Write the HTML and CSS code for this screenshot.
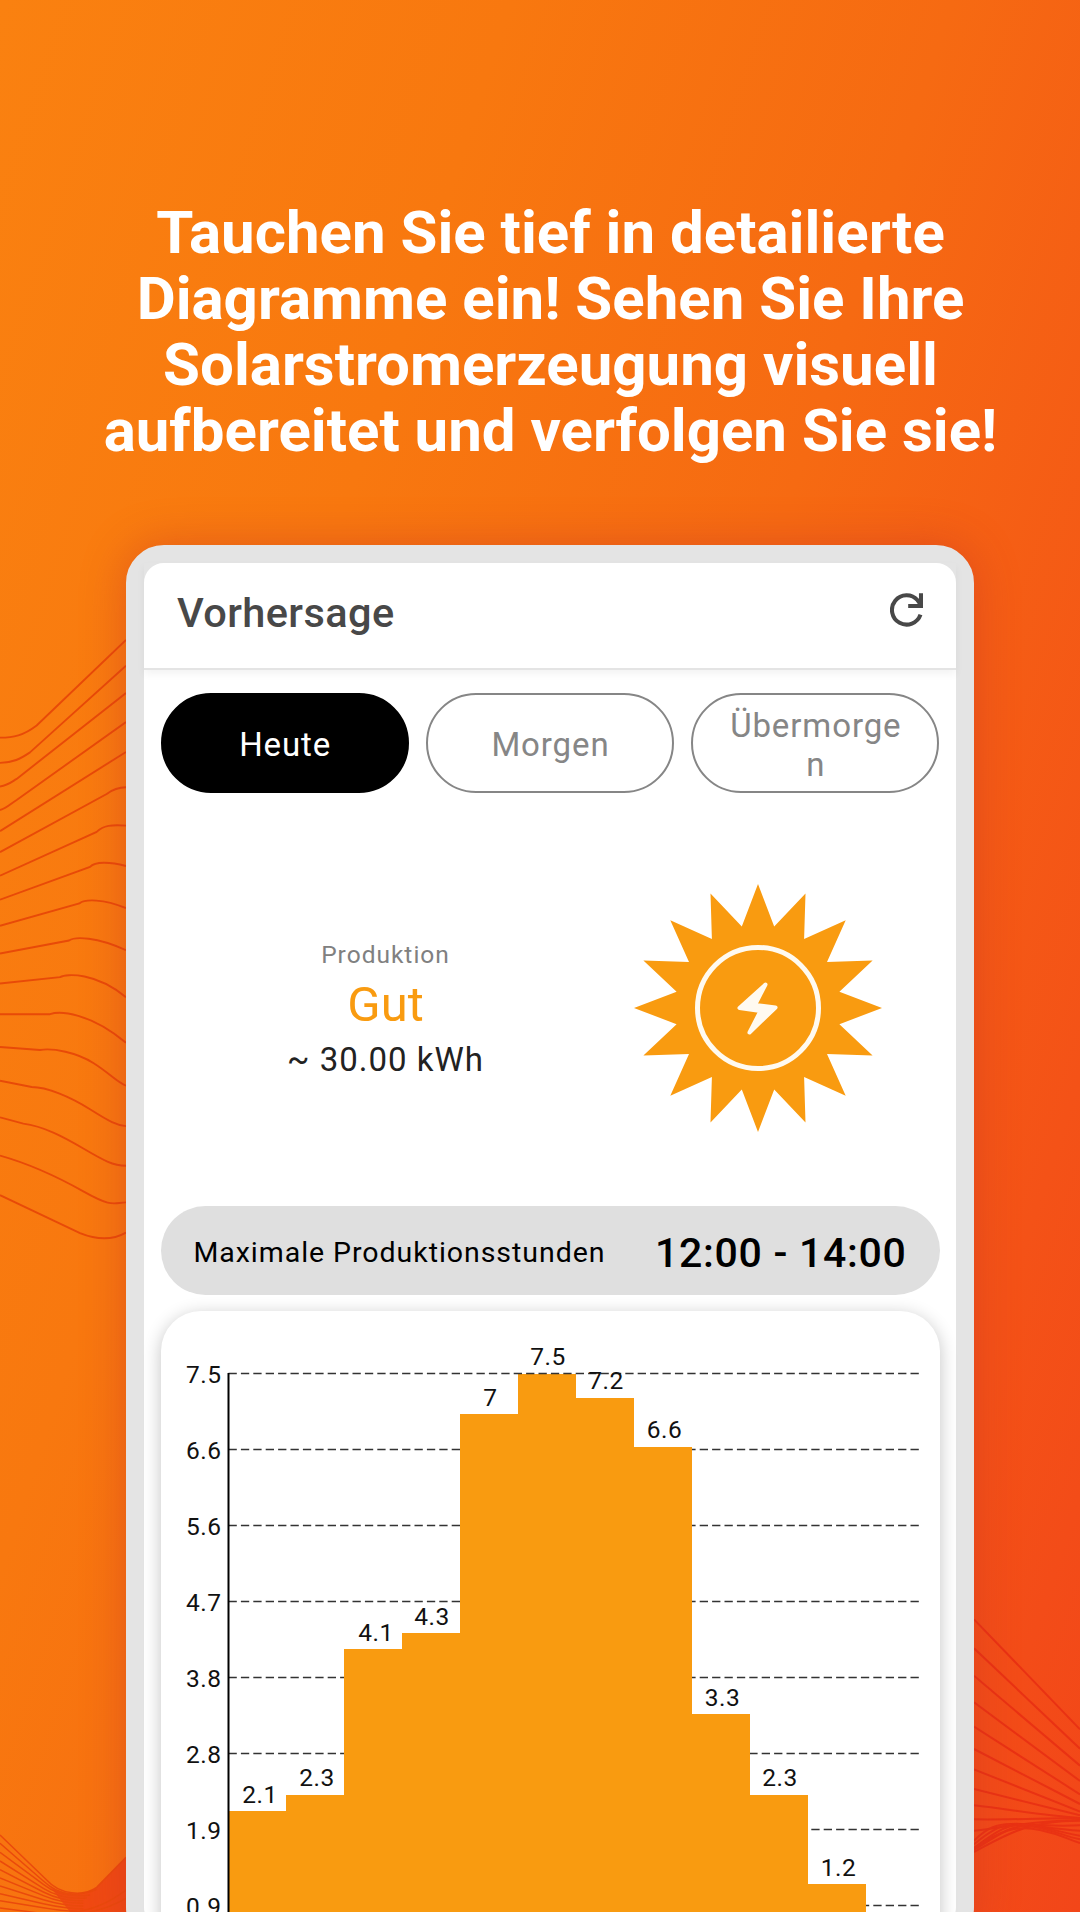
FILE: index.html
```html
<!DOCTYPE html>
<html lang="de">
<head>
<meta charset="UTF-8">
<title>Vorhersage</title>
<link rel="stylesheet" href="styles.css">
</head>
<body>
<svg class="waves waves_left" viewBox="0 0 378 1568" preserveAspectRatio="none">
    <path d="M0 327C40 327 70 322 110 298L378 95"/>
    <path d="M0 387C40 386 60 378 90 362L378 156"/>
    <path d="M0 443C25 440 35 432 50 425L378 221"/>
    <path d="M0 499C20 495 30 485 50 475L378 290"/>
    <path d="M0 549L378 361"/>
    <path d="M0 599L320 461C340 449 355 445 378 445"/>
    <path d="M0 655L290 551C310 536 335 533 378 536"/>
    <path d="M0 712L270 634C285 621 330 622 378 632"/>
    <path d="M0 774L238 721C255 710 310 710 378 732"/>
    <path d="M0 840L207 809C225 799 290 800 378 832"/>
    <path d="M0 911L180 896C200 887 290 885 378 944"/>
    <path d="M0 984L150 984C180 976 270 980 378 1052"/>
    <path d="M0 1062L120 1069C160 1064 230 1075 280 1100S350 1145 378 1154"/>
    <path d="M0 1142L95 1157C140 1157 210 1180 270 1210S350 1248 378 1250"/>
    <path d="M0 1229L70 1244C130 1250 190 1275 250 1303S340 1344 378 1344"/>
    <path d="M0 1320C90 1340 160 1365 250 1405S340 1432 378 1431"/>
    <path d="M0 1414L240 1504C290 1520 340 1520 378 1503"/>
</svg>
<svg class="waves waves_bottom" viewBox="0 0 378 396">
    <path class="fill" d="M150 320C190 348 260 348 290 322L378 232V396H210Z"/>
    <path d="M0 165L140 300C180 345 250 350 290 322L378 232"/>
    <path d="M0 190L130 303C180 350 240 350 290 328"/>
    <path d="M0 217L130 313C170 345 220 352 270 345"/>
    <path d="M0 243L130 325C170 350 210 358 260 354"/>
    <path d="M0 269L130 336C170 356 210 364 250 362"/>
    <path d="M0 294L130 347C170 364 210 370 250 370"/>
    <path d="M0 318L130 359C170 371 210 378 250 378"/>
    <path d="M0 341L130 371C170 380 210 386 250 386"/>
    <path d="M0 362L130 383C170 390 200 393 230 394"/>
    <path d="M0 384L110 398"/>
    <path d="M230 396C290 385 330 365 378 330"/>
    <path d="M270 396C310 388 340 376 378 355"/>
</svg>
<svg class="waves waves_right" viewBox="162 0 318 996">
    <path d="M162 118L480 448"/>
    <path d="M162 205L480 506"/>
    <path d="M162 287L480 557"/>
    <path d="M162 367L480 603"/>
    <path d="M162 440L480 643"/>
    <path d="M162 507L480 672"/>
    <path d="M162 568L480 695"/>
    <path d="M162 627L480 706"/>
    <path d="M162 676C280 690 380 708 480 714"/>
    <path d="M162 718C270 720 380 714 480 714"/>
    <path d="M162 752C240 745 320 722 480 720"/>
    <path d="M162 782C200 745 230 730 280 732S400 740 480 736"/>
    <path d="M162 793C210 752 250 728 300 732S410 748 480 752"/>
    <path d="M162 803C220 762 260 728 320 734S420 758 480 767"/>
    <path d="M162 809C230 772 270 728 340 740S430 768 480 778"/>
    <path d="M162 816C250 770 320 720 480 722"/>
    <path d="M162 806C240 750 290 735 360 750S440 778 480 789"/>
</svg>

<div class="page">
    <h1>Tauchen Sie tief in detailierte<br>Diagramme ein! Sehen Sie Ihre<br>Solarstromerzeugung visuell<br>aufbereitet und verfolgen Sie sie!</h1>

    <div class="phone">
        <div class="header">
            <h2>Vorhersage</h2>
            <svg class="refresh" viewBox="0 0 98 100">
                <path d="M90.500 64A43.500 43.500 0 1 1 82 21L90 32"/>
                <path d="M92 0V38H54"/>
            </svg>
        </div>

        <div class="content">
            <div class="days">
                <span class="active">Heute</span>
                <span>Morgen</span>
                <span>Übermorgen</span>
            </div>

            <div class="forecast">
                <div class="production">
                    <div class="label">Produktion</div>
                    <div class="rating">Gut</div>
                    <div class="amount">~ 30.00 kWh</div>
                </div>
                <svg class="sun" viewBox="-124 -124 248 248">
                    <path class="rays" d="M0 -124L16.200 -81.400L47.500 -114.600L46.100 -69L87.700 -87.700L69 -46.100L114.600 -47.500L81.400 -16.200L124 0L81.400 16.200L114.600 47.500L69 46.100L87.700 87.700L46.100 69L47.500 114.600L16.200 81.400L0 124L-16.200 81.400L-47.500 114.600L-46.100 69L-87.700 87.700L-69 46.100L-114.600 47.500L-81.400 16.200L-124 0L-81.400 -16.200L-114.600 -47.500L-69 -46.100L-87.700 -87.700L-46.100 -69L-47.500 -114.600L-16.200 -81.400Z"/>
                    <circle r="60.500"/>
                    <path class="bolt" d="M7.500 -23.500L-18.500 0L2.500 3L-8.500 24.500L17.500 -.500L-3 -3Z"/>
                </svg>
            </div>

            <div class="max_hours">
                <span class="text">Maximale Produktionsstunden</span>
                <span class="hours">12:00 - 14:00</span>
            </div>

            <div class="chart">
                <svg viewBox="0 0 779 601">
                    <g class="grid">
                        <path d="M67.500 138.500H758.500"/>
                        <path d="M67.500 214.500H758.500"/>
                        <path d="M67.500 290.500H758.500"/>
                        <path d="M67.500 366.500H758.500"/>
                        <path d="M67.500 442.500H758.500"/>
                        <path d="M67.500 518.500H758.500"/>
                        <path d="M67.500 594.500H758.500"/>
                    </g>
                    <g class="bars">
                        <rect x="66.900" y="500.300" width="58" height="120"/>
                        <rect x="124.900" y="484" width="58" height="120"/>
                        <rect x="182.900" y="338.300" width="58" height="270"/>
                        <rect x="240.900" y="322" width="58" height="280"/>
                        <rect x="298.900" y="103" width="58" height="500"/>
                        <rect x="356.900" y="62.500" width="58" height="540"/>
                        <rect x="414.900" y="87" width="58" height="520"/>
                        <rect x="472.900" y="135.700" width="58" height="470"/>
                        <rect x="530.900" y="402.700" width="58" height="200"/>
                        <rect x="588.900" y="484" width="58" height="120"/>
                        <rect x="646.900" y="573" width="58" height="30"/>
                    </g>
                    <path class="grid" d="M67.500 62.500H758.500"/>
                    <path class="axis" d="M67.500 62V601"/>
                    <g class="values">
                        <text x="99" y="491.800">2.1</text>
                        <text x="156" y="475.300">2.3</text>
                        <text x="215" y="329.600">4.1</text>
                        <text x="271" y="313.500">4.3</text>
                        <text x="329.500" y="94.500">7</text>
                        <text x="387" y="54.300">7.5</text>
                        <text x="445" y="78.300">7.2</text>
                        <text x="503.500" y="127.300">6.6</text>
                        <text x="561.500" y="394.500">3.3</text>
                        <text x="619" y="475.300">2.3</text>
                        <text x="677.500" y="564.500">1.2</text>
                    </g>
                    <g class="ticks">
                        <text x="60.500" y="71.700">7.5</text>
                        <text x="60.500" y="147.700">6.6</text>
                        <text x="60.500" y="223.700">5.6</text>
                        <text x="60.500" y="299.700">4.7</text>
                        <text x="60.500" y="375.700">3.8</text>
                        <text x="60.500" y="451.700">2.8</text>
                        <text x="60.500" y="527.700">1.9</text>
                        <text x="60.500" y="603.700">0.9</text>
                    </g>
                </svg>
            </div>
        </div>
    </div>
</div>
</body>
</html>
```
FILE: styles.css
```css
/*
sun orange: #f99b10
frame: #e4e4e4
title: #484848
inactive: #868686
*/
* {
    box-sizing: border-box;
}

body {
    font-family: Roboto, sans-serif;
    margin: 0;
    position: relative;
    width: 1080px;
    height: 1912px;
    overflow: hidden;
    background: linear-gradient(108deg, #fa8110 0%, #f8780f 30%, #f66a12 56%, #f45217 84%, #f24619 100%);
}

/* background lines */
.waves {
    position: absolute;
    fill: none;
    stroke: #e84a08;
    stroke-width: 4.5;
}

.waves_left {
    left: 0;
    top: 600px;
    width: 126px;
    height: 660px;
    stroke-width: 1.900px;
}

.waves_left path {
    vector-effect: non-scaling-stroke;
}

.waves_bottom {
    left: 0;
    bottom: 0;
    width: 126px;
    height: 132px;
    stroke: #ea4a0c;
}

.waves_bottom .fill {
    fill: #f04a12;
    stroke: none;
}

.waves_right {
    right: 0;
    bottom: 0;
    width: 106px;
    height: 332px;
    stroke: #e93213;
    stroke-width: 6;
}

.page {
    position: relative;
    padding: 200px 0 0 20px;
}

h1 {
    margin: 0;
    height: 345px;
    padding-left: 1px;
    font-size: 60px;
    font-weight: 700;
    line-height: 66px;
    text-align: center;
    white-space: nowrap;
    color: white;
}

.phone {
    width: 848px;
    height: 1400px;
    margin: 0 auto;
    border: 18px solid #e4e4e4;
    border-radius: 38px;
    background: white;
    box-shadow: 0 0 44px rgba(200, 50, 40, 0.45);
}

.header {
    display: flex;
    justify-content: space-between;
    align-items: center;
    height: 107px;
    padding: 0 33px 7px;
    border-bottom: 2px solid #e4e4e4;
    box-shadow: 0 4px 8px rgba(0, 0, 0, 0.05);
}

.header h2 {
    margin: 0;
    font-size: 41.500px;
    font-weight: 500;
    letter-spacing: 0.400px;
    color: #484848;
}

.refresh {
    width: 33px;
    height: 34px;
    margin-bottom: 4px;
    fill: none;
    stroke: #484848;
    stroke-width: 12;
}

.content {
    padding: 23px 16.500px 0;
}

.days {
    display: flex;
    gap: 17px;
}

.days > span {
    flex: 1 1 0;
    display: flex;
    justify-content: center;
    align-items: center;
    height: 100px;
    padding: 3px 31px 0 32px;
    border: 2px solid #868686;
    border-radius: 50px;
    font-size: 33px;
    line-height: 39px;
    letter-spacing: 0.900px;
    text-align: center;
    word-break: break-all;
    color: #868686;
}

.days > span.active {
    background: black;
    border-color: black;
    color: white;
}

.forecast {
    display: flex;
    align-items: center;
    height: 413px;
    padding-top: 17px;
}

.production {
    display: flex;
    flex-direction: column;
    gap: 6px;
    width: 450px;
    padding-top: 2px;
    text-align: center;
}

.production .label {
    font-size: 24.500px;
    line-height: 30px;
    letter-spacing: 1px;
    color: #808080;
}

.production .rating {
    font-size: 49px;
    line-height: 58px;
    color: #f99b10;
}

.production .amount {
    font-size: 33px;
    line-height: 39px;
    letter-spacing: 1px;
    color: #222;
}

.sun {
    width: 248px;
    height: 248px;
    margin-left: 23px;
}

.sun .rays {
    fill: #f99b10;
}

.sun circle {
    fill: none;
    stroke: #fffaf0;
    stroke-width: 5;
}

.sun .bolt {
    fill: #fffaf0;
    stroke: #fffaf0;
    stroke-width: 4;
    stroke-linejoin: round;
}

.max_hours {
    display: flex;
    justify-content: space-between;
    align-items: center;
    height: 89px;
    padding: 4px 33px 0;
    border-radius: 45px;
    background: #dfdfdf;
    color: black;
}

.max_hours .text {
    font-size: 28.500px;
    letter-spacing: 0.950px;
}

.max_hours .hours {
    font-size: 41px;
    font-weight: 500;
    letter-spacing: 0.700px;
}

.chart {
    height: 680px;
    margin-top: 16px;
    border-radius: 40px;
    background: white;
    box-shadow: 0 4px 18px rgba(0, 0, 0, 0.24);
}

.chart svg {
    display: block;
    width: 779px;
    height: 601px;
}

.chart .grid {
    stroke: #333;
    stroke-width: 1.500;
    stroke-dasharray: 8.300 4.100;
}

.chart .bars {
    fill: #f99b10;
    shape-rendering: crispEdges;
}

.chart .axis {
    stroke: black;
    stroke-width: 2;
}

.chart text {
    font-size: 24.500px;
    letter-spacing: 0.500px;
    fill: #111;
}

.chart .values {
    text-anchor: middle;
}

.chart .ticks {
    text-anchor: end;
}
```
